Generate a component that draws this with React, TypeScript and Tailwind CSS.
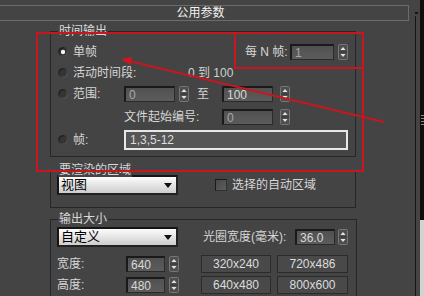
import React from 'react';

function Radio({ on = false }: { on?: boolean }) {
  return (
    <svg width="10" height="10" viewBox="0 0 10 10" className="shrink-0">
      <defs>
        <linearGradient id={on ? 'rg1' : 'rg0'} x1="0" y1="0" x2="1" y2="1">
          <stop offset="0" stopColor="#101010" />
          <stop offset="1" stopColor="#5e5e5e" />
        </linearGradient>
      </defs>
      <circle cx="5" cy="5" r="4.9" fill={`url(#${on ? 'rg1' : 'rg0'})`} />
      <circle cx="5" cy="5" r="3.3" fill={on ? '#2e2e2e' : '#343434'} />
      {on && <circle cx="5" cy="5" r="2.2" fill="#f4f4f4" />}
    </svg>
  );
}

function Spinner() {
  return (
    <svg width="10" height="16" viewBox="0 0 10 16" className="shrink-0">
      <rect x="0.5" y="0.5" width="9" height="15" rx="1" fill="#4e4e4e" stroke="#767676" />
      <line x1="1" y1="8" x2="9" y2="8" stroke="#333" />
      <path d="M5 3 L7.5 6 L2.5 6 Z" fill="#e4e4e4" />
      <path d="M2.5 10 L7.5 10 L5 13 Z" fill="#e4e4e4" />
    </svg>
  );
}

function Field({ w, value, dim = false }: { w: string; value: string; dim?: boolean }) {
  return (
    <div
      className={`${w} flex h-[16px] shrink-0 items-center border border-t-2 border-l-2 border-[#1a1a1a] border-r-[#2a2a2a] border-b-[#2a2a2a] bg-linear-to-b from-[#515151] to-[#5c5c5c] pl-[3px] ${dim ? 'text-[#a8a8a8]' : 'text-[#d8d8d8]'}`}
    >
      {value}
    </div>
  );
}

function Dropdown({ value }: { value: string }) {
  return (
    <div className="flex h-[20px] w-[121px] shrink-0 items-center justify-between border-2 border-[#151515] border-r-[#222] border-b-[#222] bg-linear-to-b from-[#fdfdfd] to-[#cdcdcd] pl-[2px] pr-[4px] text-[13px] text-black">
      <span>{value}</span>
      <svg width="8" height="5" viewBox="0 0 8 5">
        <path d="M0 0 L8 0 L4 5 Z" fill="#111" />
      </svg>
    </div>
  );
}

function Btn({ w, label }: { w: string; label: string }) {
  return (
    <div className={`${w} flex h-[18px] shrink-0 items-center justify-center border border-[#2b2b2b] bg-[#494949] text-[#dcdcdc]`}>
      {label}
    </div>
  );
}

function GroupLabel({ text }: { text: string }) {
  return (
    <span className="absolute -top-[8px] left-[7px] bg-[#444444] px-px leading-[14px] text-[#d8d8d8]">{text}</span>
  );
}

export default function App() {
  return (
    <div className="relative flex h-[296px] w-[424px] overflow-hidden bg-[#444444] font-['Liberation_Sans','Noto_Sans_CJK_SC',sans-serif] text-[12px] leading-[14px] text-[#d6d6d6]">
      <div className="flex w-[420px] flex-col">
        <div className="h-[2px] bg-[#1e1e1e]" />
        <div className="flex flex-1">
          <div className="flex w-[415px] flex-col">
            {/* 卷展栏标题 */}
            <div className="ml-[-1px] mt-[5px] flex h-[16px] w-[410px] items-center justify-center border border-[#6c6c6c] pr-[7px] text-[#f2f2f2]">
              公用参数
            </div>

            {/* 时间输出 */}
            <div className="relative ml-[50px] mt-[10px] flex h-[126px] w-[306px] flex-col border border-[#272727] pl-[7px] pt-[11px]">
              <GroupLabel text="时间输出" />
              <div className="flex h-[18px] items-center">
                <div className="flex w-[187px] items-center">
                  <Radio on />
                  <span className="ml-[5px]">单帧</span>
                </div>
                <span className="w-[45px]">每 N 帧:</span>
                <Field w="w-[44px]" value="1" dim />
                <div className="ml-[4px]"><Spinner /></div>
              </div>
              <div className="mt-[3px] flex h-[18px] items-center">
                <div className="flex w-[130px] items-center">
                  <Radio />
                  <span className="ml-[5px]">活动时间段:</span>
                </div>
                <span className="text-[#cfcfcf]">0 到 100</span>
              </div>
              <div className="mt-[3px] flex h-[18px] items-center">
                <div className="flex w-[66px] items-center">
                  <Radio />
                  <span className="ml-[5px]">范围:</span>
                </div>
                <Field w="w-[51px]" value="0" dim />
                <div className="ml-[4px]"><Spinner /></div>
                <span className="ml-[8px]">至</span>
                <div className="ml-[13px]"><Field w="w-[51px]" value="100" /></div>
                <div className="ml-[7px]"><Spinner /></div>
              </div>
              <div className="mt-[5px] flex h-[18px] items-center">
                <span className="ml-[66px] w-[98px]">文件起始编号:</span>
                <Field w="w-[51px]" value="0" dim />
                <div className="ml-[7px]"><Spinner /></div>
              </div>
              <div className="mt-[4px] flex h-[20px] items-center">
                <div className="flex w-[66px] items-center">
                  <Radio />
                  <span className="ml-[5px]">帧:</span>
                </div>
                <div className="flex h-[20px] w-[224px] items-center border-2 border-[#e8e8e8] bg-[#565656] pl-[4px] text-[#dedede]">
                  1,3,5-12
                </div>
              </div>
            </div>

            {/* 要渲染的区域 */}
            <div className="relative ml-[50px] mt-[13px] flex h-[38px] w-[306px] border border-[#272727] pl-[6px] pt-[4px]">
              <GroupLabel text="要渲染的区域" />
              <div className="flex h-[20px] items-center">
                <Dropdown value="视图" />
                <div className="ml-[37px] h-[12px] w-[12px] border border-[#1a1a1a] border-r-[#303030] border-b-[#303030] bg-linear-to-br from-[#484848] to-[#5e5e5e]" />
                <span className="ml-[5px]">选择的自动区域</span>
              </div>
            </div>

            {/* 输出大小 */}
            <div className="relative ml-[50px] mt-[11px] flex h-[100px] w-[307px] flex-col border border-[#272727] pl-[6px] pt-[7px]">
              <GroupLabel text="输出大小" />
              <div className="flex h-[20px] items-center">
                <Dropdown value="自定义" />
                <span className="ml-[25px] w-[92px]">光圈宽度(毫米):</span>
                <Field w="w-[40px]" value="36.0" />
                <div className="ml-[3px]"><Spinner /></div>
              </div>
              <div className="mt-[8px] flex h-[18px] items-center">
                <span className="w-[69px]">宽度:</span>
                <Field w="w-[39px]" value="640" />
                <div className="ml-[4px]"><Spinner /></div>
                <div className="ml-[22px]"><Btn w="w-[70px]" label="320x240" /></div>
                <div className="ml-[6px]"><Btn w="w-[71px]" label="720x486" /></div>
              </div>
              <div className="mt-[3px] flex h-[18px] items-center">
                <span className="w-[69px]">高度:</span>
                <Field w="w-[39px]" value="480" />
                <div className="ml-[4px]"><Spinner /></div>
                <div className="ml-[22px]"><Btn w="w-[70px]" label="640x480" /></div>
                <div className="ml-[6px]"><Btn w="w-[71px]" label="800x600" /></div>
              </div>
            </div>
          </div>

          {/* 卷展栏右侧边线 */}
          <div className="flex w-[5px] flex-col">
            <div className="mt-[12px] h-[2px] w-[3px] bg-[#151515]" />
            <div className="mt-[2px] w-px flex-1 bg-[#151515]" />
          </div>
        </div>
      </div>

      {/* 滚动条 */}
      <div className="flex w-[4px] flex-col">
        <div className="flex h-[220px] flex-col items-center bg-[#0e0e0e] pt-[115px]">
          <div className="h-px w-[3px] bg-[#8a8a8a]" />
          <div className="mt-[2px] h-px w-[3px] bg-[#8a8a8a]" />
          <div className="mt-[2px] h-px w-[3px] bg-[#8a8a8a]" />
          <div className="mt-[2px] h-px w-[3px] bg-[#8a8a8a]" />
        </div>
        <div className="flex-1 bg-[#d2d2d2]" />
      </div>

      {/* 红色标注 */}
      <svg className="pointer-events-none absolute left-0 top-0" width="424" height="296" viewBox="0 0 424 296">
        <rect x="37" y="33" width="326" height="138" fill="none" stroke="#c8161e" strokeWidth="2" />
        <rect x="235" y="33" width="128" height="35" fill="none" stroke="#c8161e" strokeWidth="2" />
        <line x1="129" y1="61" x2="384" y2="122" stroke="#c8161e" strokeWidth="2" />
        <polygon points="121,59 132,57 130,65" fill="#d0161e" />
      </svg>
    </div>
  );
}
